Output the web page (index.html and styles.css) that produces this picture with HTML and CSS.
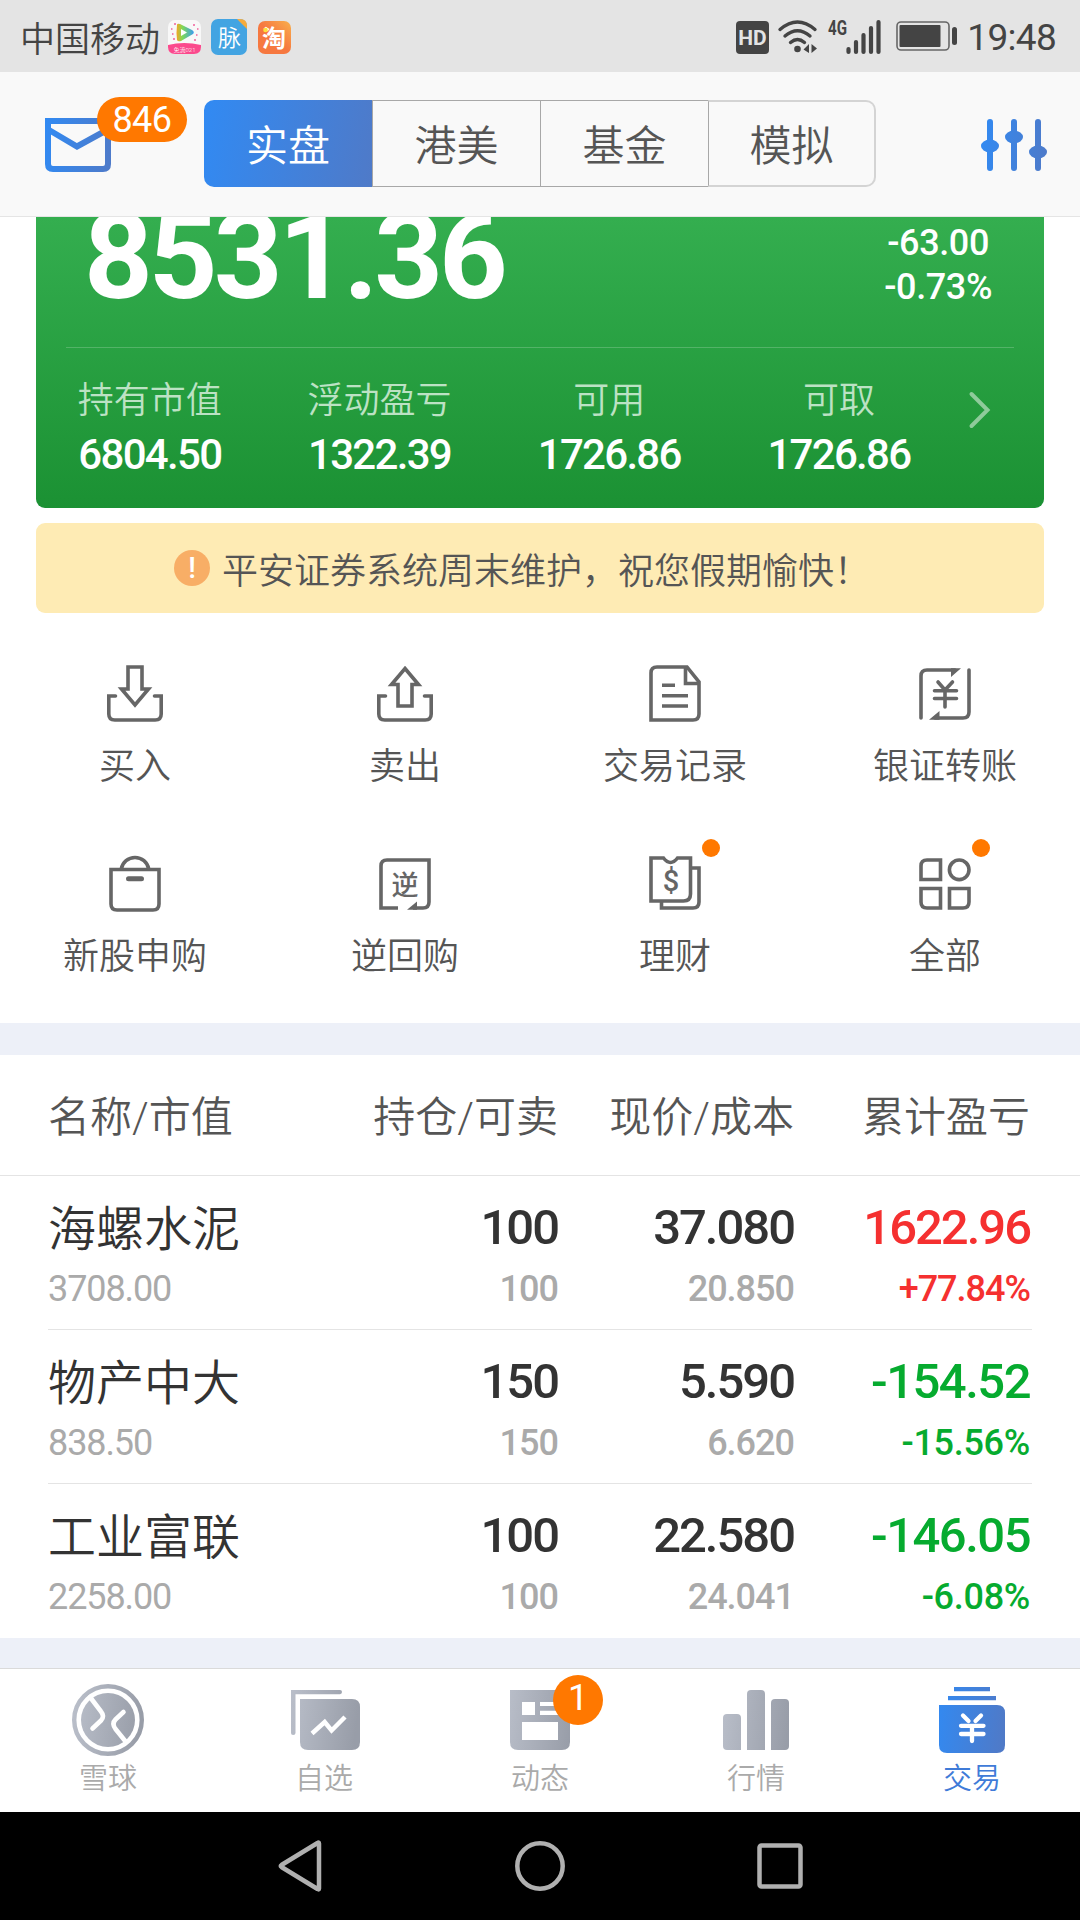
FILE: index.html
```html
<!DOCTYPE html>
<html lang="zh-CN">

<head>
  <meta charset="UTF-8">
  <meta name="viewport" content="width=device-width, initial-scale=1.0">
  <title>交易</title>
  <link rel="stylesheet" href="styles.css">
</head>

<body>
  <svg class="defs" width="0" height="0">
    <defs>
      <linearGradient id="blue" gradientUnits="userSpaceOnUse" x1="0" y1="0" x2="72" y2="8">
        <stop offset="0" stop-color="#318af3" />
        <stop offset="1" stop-color="#4f7ac8" />
      </linearGradient>
      <linearGradient id="gray" gradientUnits="userSpaceOnUse" x1="0" y1="0" x2="72" y2="8">
        <stop offset="0" stop-color="#bbc0cb" />
        <stop offset="1" stop-color="#989da8" />
      </linearGradient>
      <linearGradient id="tao" x1="0" y1="1" x2="1" y2="0">
        <stop offset="0.5" stop-color="#f67840" />
        <stop offset="1" stop-color="#f9b04c" />
      </linearGradient>
      <linearGradient id="play" x1="0" y1="0" x2="1" y2="0">
        <stop offset="0" stop-color="#f5a623" />
        <stop offset="0.35" stop-color="#7ed957" />
        <stop offset="1" stop-color="#3a9cf0" />
      </linearGradient>
    </defs>
  </svg>

  <div class="status">
    <span class="carrier">中国移动</span>
    <svg class="app-video" width="33" height="34" viewBox="0 0 33 34">
      <rect width="33" height="34" rx="7" fill="#f8f8f8" />
      <path d="M0 25Q16 21 33 25V27Q33 34 26 34H7Q0 34 0 27Z" fill="#fb4a8d" />
      <path d="M9 5Q8 13 9 20Q10 22 13 21L25 14Q27 12 24 10L12 4Q9 3 9 5Z" fill="url(#play)" />
      <path d="M13 9V16L19 12.500Z" fill="#fff" />
      <path d="M6 4h2M25 5h2M3 9h1.500M29 9h1.500M4 14h1.500M28 15h1.500M5 19h2M26 20h2" stroke="#f0609c" stroke-width="1.500" />
      <text x="16.500" y="32" font-size="6" text-anchor="middle" fill="#fff">免流021</text>
    </svg>
    <svg class="app-mai" width="36" height="36" viewBox="0 0 36 36">
      <rect width="36" height="36" rx="7" fill="#43a4e2" />
      <path d="M26 0H29Q36 0 36 7V10Z" fill="#f5ab3d" />
      <text x="18.500" y="27" font-size="23" text-anchor="middle" fill="#fff">脉</text>
    </svg>
    <svg class="app-tao" width="33" height="33" viewBox="0 0 33 33">
      <rect width="33" height="33" rx="7" fill="url(#tao)" />
      <text x="16" y="25.500" font-size="24" font-weight="700" text-anchor="middle" fill="#fff">淘</text>
      <circle cx="7.500" cy="9" r="2.300" fill="#fde03c" />
    </svg>

    <div class="system">
      <svg width="33" height="33" viewBox="0 0 33 33">
        <rect width="33" height="33" rx="4" fill="#444" />
        <text x="16.500" y="24" font-size="21" font-weight="700" text-anchor="middle" fill="#e4e4e4">HD</text>
      </svg>
      <svg class="wifi" width="40" height="34" viewBox="0 0 40 34" fill="none" stroke="#444" stroke-width="3.400" stroke-linecap="round">
        <path d="M2 9.500Q19.500-5.500 37 9.500M7 16Q19.500 5.500 32 16M12.500 22.500Q19.500 16.500 26.500 22.500" />
        <circle cx="19.500" cy="29" r="3.300" fill="#444" stroke="none" />
        <path d="M31 24V33L25.500 29.500ZM33.500 24L39 28.500L33.500 33Z" fill="#444" stroke="none" />
      </svg>
      <svg class="signal" width="53" height="34" viewBox="0 0 53 34">
        <text x="0" y="15" font-size="20" font-weight="700" textLength="19" lengthAdjust="spacingAndGlyphs" fill="#444">4G</text>
        <path d="M20.500 29V32M28 22V32M35.500 15V32M43 8V32M50.500 2V32" stroke="#444" stroke-width="4.200" stroke-linecap="round" />
      </svg>
      <svg class="battery" width="61" height="30" viewBox="0 0 61 30">
        <rect x="1" y="1" width="52" height="28" rx="4" fill="none" stroke="#666" stroke-width="1.600" />
        <rect x="3.500" y="4" width="41" height="22" rx="1" fill="#444" />
        <rect x="56" y="6" width="5" height="18" rx="2.500" fill="#444" />
      </svg>
      <span class="time">19:48</span>
    </div>
  </div>

  <header class="header">
    <div class="mail">
      <svg width="66" height="54" viewBox="0 0 66 54" fill="none" stroke="url(#blue)" stroke-width="6">
        <path d="M3 3H63V46Q63 51 58 51H8Q3 51 3 46Z" />
        <path d="M4 12L32 28.500L62 12" />
      </svg>
      <span class="badge">846</span>
    </div>
    <div class="tabs">
      <div class="tab active">实盘</div>
      <div class="tab">港美</div>
      <div class="tab">基金</div>
      <div class="tab">模拟</div>
    </div>
    <svg class="settings" width="66" height="52" viewBox="0 0 66 52" stroke="url(#blue)" stroke-width="6" stroke-linecap="round">
      <path d="M9 3V49M33 3V49.010M57 3V49" />
      <g fill="url(#blue)" stroke="none">
        <ellipse cx="9" cy="27" rx="9" ry="6.500" />
        <ellipse cx="33" cy="18" rx="9" ry="6.500" />
        <ellipse cx="57" cy="33" rx="9" ry="6.500" />
      </g>
    </svg>
  </header>

  <div class="card">
    <div class="total">
      <div class="amount">8531.36</div>
      <div class="change">
        <div>-63.00</div>
        <div>-0.73%</div>
      </div>
    </div>
    <div class="stats">
      <div class="stat"><span>持有市值</span><b>6804.50</b></div>
      <div class="stat"><span>浮动盈亏</span><b>1322.39</b></div>
      <div class="stat"><span>可用</span><b>1726.86</b></div>
      <div class="stat"><span>可取</span><b>1726.86</b></div>
      <svg class="arrow" width="22" height="38" viewBox="0 0 22 38" fill="none" stroke="#8fcb9b" stroke-width="4" stroke-linecap="round">
        <path d="M2.500 3L18.500 19L2.500 35" />
      </svg>
    </div>
  </div>

  <div class="notice">
    <i class="warn">!</i>
    <span>平安证券系统周末维护，祝您假期愉快！</span>
  </div>

  <div class="actions">
    <div class="action">
      <svg viewBox="0 0 72 72">
        <path d="M29 9H43V31H49.500L36 47L22.500 31H29Z" />
        <path stroke-linecap="round" d="M16.500 38H9.800V56Q9.800 62 15.800 62H56.200Q62.200 62 62.200 56V38H55.500" />
      </svg>
      <span>买入</span>
    </div>
    <div class="action">
      <svg viewBox="0 0 72 72">
        <path d="M36 10.500L49.500 26.500H43V48H29V26.500H22.500Z" />
        <path stroke-linecap="round" d="M16.500 38H9.800V56Q9.800 62 15.800 62H56.200Q62.200 62 62.200 56V38H55.500" />
      </svg>
      <span>卖出</span>
    </div>
    <div class="action">
      <svg viewBox="0 0 72 72">
        <path d="M12 62V15Q12 9 18 9H48L60 24V56Q60 62 54 62Z" />
        <path d="M46.500 9V25.500H60M23 27.300H36M23 37.700H49M23 48H49" />
      </svg>
      <span>交易记录</span>
    </div>
    <div class="action">
      <svg viewBox="0 0 72 72">
        <g stroke-linecap="round">
          <path d="M12 60V18Q12 12 18 12H46M60 12V54Q60 60 54 60H26" />
          <path d="M29 24L36 32L43.500 24M25.500 32.700H47.500M25.500 40.500H47.500M36 32V49" />
        </g>
        <path class="solid" d="M42 10.200H52L42 19ZM20 61.800L30.500 53V61.800Z" />
      </svg>
      <span>银证转账</span>
    </div>
    <div class="action">
      <svg viewBox="0 0 72 72">
        <path d="M12 21.500H60V56Q60 62 54 62H18Q12 62 12 56Z" />
        <path d="M22.300 21A13.900 13.900 0 0 1 49.700 21" />
        <path stroke-width="5" stroke-linecap="round" d="M29.500 30.700H42.500" />
      </svg>
      <span>新股申购</span>
    </div>
    <div class="action">
      <svg viewBox="0 0 72 72">
        <path d="M29 60H12V18Q12 12 18 12H60V54Q60 60 54 60H44" />
        <path class="solid" d="M38 61.800L48 53.500V61.800Z" />
        <text x="36" y="46.500" font-size="27">逆</text>
      </svg>
      <span>逆回购</span>
    </div>
    <div class="action">
      <svg viewBox="0 0 72 72">
        <path d="M12 10H24.500Q31.500 19 38.500 10H51.500V46Q51.500 53 44.500 53H12Z" />
        <path d="M51.500 20H60V54Q60 60 54 60H22.500V53" />
        <text x="32" y="43" font-size="29">$</text>
      </svg>
      <i class="dot"></i>
      <span>理财</span>
    </div>
    <div class="action">
      <svg viewBox="0 0 72 72">
        <path d="M31.500 31.500H12V18Q12 12 18 12H31.500ZM31.500 40.500V60H18Q12 60 12 54V40.500ZM40.500 40.500H60V54Q60 60 54 60H40.500Z" />
        <circle cx="50.200" cy="21.800" r="9.800" />
      </svg>
      <i class="dot"></i>
      <span>全部</span>
    </div>
  </div>

  <div class="holdings">
    <div class="row head">
      <div>名称/市值</div>
      <div>持仓/可卖</div>
      <div>现价/成本</div>
      <div>累计盈亏</div>
    </div>
    <div class="row">
      <div class="name"><b>海螺水泥</b><span>3708.00</span></div>
      <div><b>100</b><span>100</span></div>
      <div><b>37.080</b><span>20.850</span></div>
      <div class="up"><b>1622.96</b><span>+77.84%</span></div>
    </div>
    <div class="row">
      <div class="name"><b>物产中大</b><span>838.50</span></div>
      <div><b>150</b><span>150</span></div>
      <div><b>5.590</b><span>6.620</span></div>
      <div class="down"><b>-154.52</b><span>-15.56%</span></div>
    </div>
    <div class="row">
      <div class="name"><b>工业富联</b><span>2258.00</span></div>
      <div><b>100</b><span>100</span></div>
      <div><b>22.580</b><span>24.041</span></div>
      <div class="down"><b>-146.05</b><span>-6.08%</span></div>
    </div>
  </div>

  <nav class="tabbar">
    <div class="item">
      <svg viewBox="0 0 72 72">
        <circle cx="36" cy="36" r="33.800" fill="none" stroke="url(#gray)" stroke-width="4.400" />
        <circle cx="36" cy="36" r="27" fill="url(#gray)" />
        <path d="M18 13L29 27.500Q33 32.500 29 36.500L20.500 44.500M51.500 28L43.500 35.500Q39.500 39.500 43.500 45L54 58" fill="none" stroke="#fff" stroke-width="4.600" stroke-linecap="round" />
      </svg>
      <span>雪球</span>
    </div>
    <div class="item">
      <svg viewBox="0 0 72 72">
        <path d="M3 6H52Q54 6 54 8T52 10.300H7.500V49Q7.500 51 5.200 51T3 49Z" fill="url(#gray)" />
        <path d="M12 15H64Q72 15 72 23V58Q72 66 64 66H20Q12 66 12 58Z" fill="url(#gray)" />
        <path d="M24 49.500L36.700 38L43.600 46.500L57 33" fill="none" stroke="#fff" stroke-width="4.500" />
      </svg>
      <span>自选</span>
    </div>
    <div class="item">
      <svg viewBox="0 0 72 72">
        <path d="M6 6H58Q66 6 66 14V58Q66 66 58 66H14Q6 66 6 58Z" fill="url(#gray)" />
        <path d="M18 18H31V31H18ZM36 18H54V22H36ZM36 26.700H54V31H36ZM18 38H54V56H18Z" fill="#fff" />
      </svg>
      <i class="count">1</i>
      <span>动态</span>
    </div>
    <div class="item">
      <svg viewBox="0 0 72 72" fill="url(#gray)">
        <path d="M7 30H17Q21 30 21 34V66H7Q3 66 3 62V34Q3 30 7 30Z" />
        <path d="M31 6H41Q45 6 45 10V66H27V10Q27 6 31 6Z" />
        <path d="M55 15H65Q69 15 69 19V62Q69 66 65 66H51V19Q51 15 55 15Z" />
      </svg>
      <span>行情</span>
    </div>
    <div class="item current">
      <svg viewBox="0 0 72 72" fill="url(#blue)">
        <path d="M18 3H54V7.300H18ZM12 12H60V16.300H12Z" />
        <path d="M3 21H61Q69 21 69 29V61Q69 69 61 69H11Q3 69 3 61Z" />
        <path d="M27 31.500L32.500 37M45 31.500L39.500 37M25 41.800H47.500M25 50H47.500M36 42V57" fill="none" stroke="#fff" stroke-width="4.300" stroke-linecap="round" />
      </svg>
      <span>交易</span>
    </div>
  </nav>

  <div class="navbar">
    <svg viewBox="0 0 60 60"><path d="M49 7.500V52.500Q49 54 47.500 53L11.500 31Q10 30 11.500 29L47.500 7Q49 6 49 7.500Z" /></svg>
    <svg viewBox="0 0 60 60"><circle cx="30" cy="30" r="22.700" /></svg>
    <svg viewBox="0 0 60 60"><rect x="9.500" y="9.500" width="41" height="41" rx="2" /></svg>
  </div>
</body>

</html>
```
FILE: styles.css
```css
* {
  box-sizing: border-box;
}

body {
  margin: 0;
  width: 1080px;
  height: 1920px;
  display: flex;
  flex-direction: column;
  overflow: hidden;
  background-color: #edf0f8;
  font-family: Roboto, "Noto Sans CJK SC", sans-serif;
  font-weight: 350;
  color: #555;
}

i {
  font-style: normal;
}

svg {
  display: block;
  flex: none;
  overflow: visible;
}

.defs {
  position: absolute;
}

/* 状态栏 */
.status {
  height: 72px;
  padding: 2px 24px 0 20px;
  display: flex;
  align-items: center;
  background-color: #e4e4e4;
  color: #444;
  font-size: 35px;
}

.carrier {
  margin-top: -2px;
}

.app-video {
  margin-left: 8px;
}

.app-mai {
  margin-left: 10px;
}

.app-tao {
  margin-left: 11px;
}

.system {
  margin-left: auto;
  display: flex;
  align-items: center;
}

.wifi {
  margin-left: 9px;
}

.signal {
  margin-left: 10px;
}

.battery {
  margin: -2px 10px 0 15px;
}

.time {
  font-size: 37px;
  font-weight: 400;
  letter-spacing: -0.7px;
}

/* 顶部导航 */
.header {
  height: 145px;
  padding: 0 33px 0 45px;
  display: flex;
  align-items: center;
  background-color: #f9f9f9;
  border-bottom: 1px solid #e5e5e5;
}

.mail {
  position: relative;
}

.badge {
  position: absolute;
  left: 52px;
  top: -21px;
  width: 90px;
  height: 45px;
  line-height: 46px;
  border-radius: 23px;
  background-color: #ff7800;
  color: #fff;
  font-size: 36px;
  font-weight: 400;
  letter-spacing: -0.5px;
  text-align: center;
}

.tabs {
  display: flex;
  margin: 0 0 1px 93px;
}

.tab {
  width: 168px;
  height: 87px;
  line-height: 92px;
  border: 1px solid #a8a8a8;
  border-right: none;
  font-size: 42px;
  text-align: center;
}

.tab:last-child {
  border: 2px solid #d4d4d4;
  border-left: 1px solid #a8a8a8;
  border-radius: 0 10px 10px 0;
  line-height: 90px;
}

.tab.active {
  border: none;
  border-radius: 10px 0 0 10px;
  background: linear-gradient(100deg, #318af3, #4f7ac8);
  color: #fff;
  line-height: 94px;
}

.mail,
.settings {
  margin-top: 2px;
}

.settings {
  margin-left: auto;
}

/* 资产卡片 */
.card {
  height: 291px;
  flex: none;
  margin: 0 36px;
  padding: 0 30px;
  overflow: hidden;
  border-radius: 0 0 9px 9px;
  background: linear-gradient(#34ae4f, #1b9133);
  color: #fff;
}

.total {
  height: 131px;
  padding: 0 22px 0 18px;
  display: flex;
  justify-content: space-between;
  border-bottom: 1px solid rgba(255, 255, 255, 0.2);
}

.amount {
  line-height: 80px;
  font-size: 120px;
  font-weight: 700;
  letter-spacing: -4px;
}

.change {
  padding-top: 4px;
  font-size: 36px;
  font-weight: 500;
  line-height: 44px;
  letter-spacing: -0.4px;
  text-align: center;
}

.stats {
  margin-left: -31px;
  padding-top: 29px;
  display: flex;
}

.stat {
  width: 229.7px;
  display: flex;
  flex-direction: column;
  align-items: center;
}

.stat span {
  font-size: 36px;
  line-height: 48px;
  color: #bce2c4;
}

.stat b {
  margin-top: 5px;
  font-size: 42px;
  font-weight: 500;
  line-height: 50px;
  letter-spacing: -1.7px;
}

.arrow {
  margin: 14px 0 0 15px;
}

/* 公告 */
.notice {
  height: 90px;
  flex: none;
  margin: 15px 36px 0;
  padding-left: 138px;
  display: flex;
  align-items: center;
  border-radius: 9px;
  background-color: #feebb4;
  font-size: 36px;
}

.warn {
  width: 36px;
  height: 36px;
  margin-right: 12px;
  border-radius: 50%;
  background-color: #f8ae66;
  color: #fff;
  font-size: 29px;
  font-weight: 500;
  line-height: 36px;
  text-align: center;
}

/* 卡片和公告四周补白 */
.card,
.notice {
  box-shadow: 0 0 0 60px #fff;
  clip-path: inset(0 -36px -15px);
}

.notice {
  clip-path: inset(0 -36px 0);
}

.actions {
  height: 410px;
  flex: none;
  padding-top: 45px;
  display: grid;
  grid-template-columns: repeat(4, 1fr);
  row-gap: 58px;
  align-content: start;
  background-color: #fff;
}

.action {
  position: relative;
  display: flex;
  flex-direction: column;
  align-items: center;
  font-size: 36px;
  line-height: 46px;
}

.action svg {
  width: 72px;
  height: 72px;
  margin-bottom: 14px;
  fill: none;
  stroke: #666;
  stroke-width: 3.6;
}

.action svg .solid,
.action svg text {
  fill: #666;
  stroke: none;
}

.action svg text {
  font-weight: 500;
  text-anchor: middle;
}

.dot {
  position: absolute;
  top: -9px;
  left: 50%;
  width: 18px;
  height: 18px;
  margin-left: 27px;
  border-radius: 50%;
  background-color: #ff7800;
}

/* 持仓列表 */
.holdings {
  margin-top: 32px;
  background-color: #fff;
}

.row {
  height: 154px;
  margin: 0 48px;
  padding: 24px 0 0;
  display: grid;
  grid-template-columns: 240px 270px 236px 236px;
  border-bottom: 1px solid #e4e4e4;
  text-align: right;
}

.row:last-child {
  border-bottom: none;
}

.row.head {
  height: 121px;
  margin: 0;
  padding: 0 48px;
  font-size: 42px;
  line-height: 126px;
}

.row > :first-child {
  text-align: left;
}

.row b,
.row span {
  display: block;
}

.row b {
  color: #333;
  font-size: 49px;
  font-weight: 500;
  line-height: 56px;
  letter-spacing: -2px;
}

.row span {
  margin-top: 13px;
  color: #aaa;
  font-size: 36px;
  font-weight: 500;
  line-height: 40px;
  letter-spacing: -1px;
}

.row .name b {
  padding-top: 2px;
  font-size: 48px;
  font-weight: 350;
  letter-spacing: 0;
}

.row .name span {
  margin-top: 11px;
  font-weight: 400;
  letter-spacing: -1.1px;
}

.row .up b,
.row .up span {
  color: #f53030;
}

.row .down b,
.row .down span {
  color: #06ab2f;
}

.row .down b {
  letter-spacing: -1.5px;
}

.row .down span {
  letter-spacing: -0.3px;
}

/* 底部标签栏 */
.tabbar {
  height: 144px;
  margin-top: auto;
  padding-top: 15px;
  display: flex;
  flex: none;
  background-color: #fff;
  border-top: 1px solid #dadada;
}

.item {
  position: relative;
  flex: 1;
  display: flex;
  flex-direction: column;
  align-items: center;
  color: #aaa;
  font-size: 29px;
  line-height: 46px;
}

.item svg {
  width: 72px;
  height: 72px;
}

.item.current {
  color: #3f7bd8;
}

.count {
  position: absolute;
  top: -9px;
  left: 50%;
  width: 50px;
  height: 50px;
  margin-left: 13px;
  border-radius: 50%;
  background-color: #ff7800;
  color: #fff;
  font-size: 36px;
  font-weight: 400;
  line-height: 46px;
  text-align: center;
}

/* 系统导航键 */
.navbar {
  height: 108px;
  display: flex;
  flex: none;
  justify-content: center;
  align-items: center;
  gap: 180px;
  background-color: #000;
}

.navbar svg {
  width: 60px;
  height: 60px;
  fill: none;
  stroke: #b0b0b0;
  stroke-width: 4.5;
}
```
